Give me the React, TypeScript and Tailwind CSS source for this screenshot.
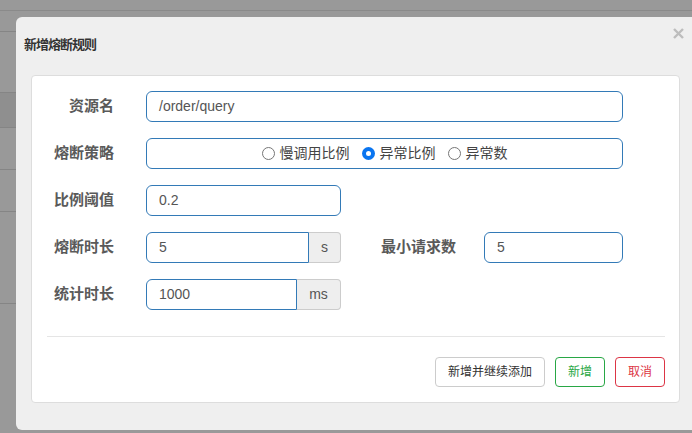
import React from "react";

const font = { fontFamily: '"Liberation Sans", "Noto Sans CJK SC", sans-serif' };

function Label({ children, className = "" }: { children: React.ReactNode; className?: string }) {
  return (
    <div className={`text-[15px] font-bold text-[#5a5a5a] text-right ${className}`}>{children}</div>
  );
}

function Radio({ label, checked }: { label: string; checked?: boolean }) {
  return (
    <label className="flex items-center gap-[5px]">
      {checked ? (
        <span className="w-[13px] h-[13px] rounded-full bg-[#0a75f0] flex items-center justify-center">
          <span className="w-[5px] h-[5px] rounded-full bg-white" />
        </span>
      ) : (
        <span className="w-[13px] h-[13px] rounded-full border border-[#767676] bg-white" />
      )}
      <span className="text-[14px] text-[#444]">{label}</span>
    </label>
  );
}

function AddonInput({ value, unit, inputW, unitW }: { value: string; unit: string; inputW: string; unitW: string }) {
  return (
    <div className="flex h-[31px]">
      <div className={`${inputW} border border-[#337ab7] rounded-l-[6px] flex items-center pl-[12px] text-[14px] text-[#555] bg-white`}>
        {value}
      </div>
      <div className={`${unitW} border border-l-0 border-[#ccc] rounded-r-[4px] bg-[#eee] flex items-center justify-center text-[14px] text-[#555]`}>
        {unit}
      </div>
    </div>
  );
}

export default function App() {
  const lines = [31, 92, 127, 169, 211, 303];
  return (
    <div className="relative w-[692px] h-[433px] bg-[#999] overflow-hidden" style={font}>
      <div className="absolute left-0 right-0 top-[10px] h-px bg-[#8a8a8a]" />
      <div className="absolute left-0 w-[16px] top-[92px] h-[35px] bg-[#8f8f8f]" />
      {lines.map((y) => (
        <div key={y} className="absolute left-0 w-[16px] h-px bg-[#858585]" style={{ top: y }} />
      ))}

      <div className="absolute left-[16px] top-[17px] w-[690px] h-[413px] bg-[#efefef] rounded-[6px] pt-[18px] pl-[15px]">
        <div className="flex items-center h-[20px]">
          <h3 className="ml-[-7px] text-[13px] font-bold text-[#333] tracking-[-1px]">新增熔断规则</h3>
        </div>
        <svg className="absolute left-[657px] top-[11px]" width="11" height="11" viewBox="0 0 11 11">
          <path d="M1 1 L10 10 M10 1 L1 10" stroke="#bdbdbd" strokeWidth="2.4" />
        </svg>

        <div className="mt-[20px] w-[649px] h-[328px] bg-white border border-[#ddd] rounded-[4px] px-[15px] pt-[15px]">
          <div className="flex flex-col gap-[16px]">
            <div className="flex items-center h-[31px]">
              <Label className="w-[67px]">资源名</Label>
              <div className="ml-[32px] w-[477px] h-[31px] border border-[#337ab7] rounded-[6px] flex items-center pl-[12px] text-[14px] text-[#555]">
                /order/query
              </div>
            </div>
            <div className="flex items-center h-[31px]">
              <Label className="w-[67px]">熔断策略</Label>
              <div className="ml-[32px] w-[477px] h-[31px] border border-[#337ab7] rounded-[6px] flex items-center justify-center gap-[12px]">
                <Radio label="慢调用比例" />
                <Radio label="异常比例" checked />
                <Radio label="异常数" />
              </div>
            </div>
            <div className="flex items-center h-[31px]">
              <Label className="w-[67px]">比例阈值</Label>
              <div className="ml-[32px] w-[195px] h-[31px] border border-[#337ab7] rounded-[6px] flex items-center pl-[12px] text-[14px] text-[#555]">
                0.2
              </div>
            </div>
            <div className="flex items-center h-[31px]">
              <Label className="w-[67px]">熔断时长</Label>
              <div className="ml-[32px]">
                <AddonInput value="5" unit="s" inputW="w-[163px]" unitW="w-[32px]" />
              </div>
              <Label className="ml-[38px] w-[77px] text-left">最小请求数</Label>
              <div className="ml-[28px] w-[139px] h-[31px] border border-[#337ab7] rounded-[6px] flex items-center pl-[12px] text-[14px] text-[#555]">
                5
              </div>
            </div>
            <div className="flex items-center h-[31px]">
              <Label className="w-[67px]">统计时长</Label>
              <div className="ml-[32px]">
                <AddonInput value="1000" unit="ms" inputW="w-[151px]" unitW="w-[44px]" />
              </div>
            </div>
          </div>

          <div className="mt-[26px] h-px bg-[#e5e5e5] w-[618px]" />

          <div className="flex justify-end gap-[10px] mt-[20px] w-[618px]">
            <button className="w-[110px] h-[30px] border border-[#ccc] rounded-[4px] bg-white text-[12px] text-[#333]">
              新增并继续添加
            </button>
            <button className="w-[50px] h-[30px] border border-[#28a745] rounded-[4px] bg-white text-[12px] text-[#28a745]">
              新增
            </button>
            <button className="w-[50px] h-[30px] border border-[#dc3545] rounded-[4px] bg-white text-[12px] text-[#dc3545]">
              取消
            </button>
          </div>
        </div>
      </div>
    </div>
  );
}
